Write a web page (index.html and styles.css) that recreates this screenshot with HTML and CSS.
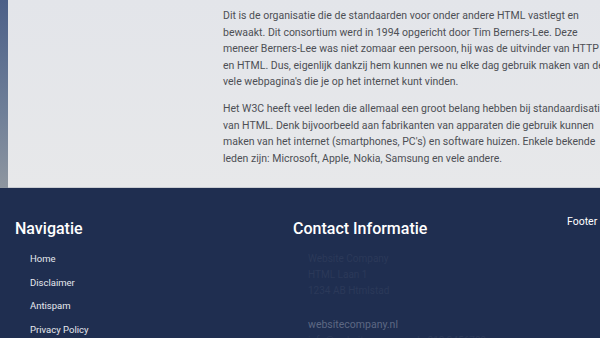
FILE: index.html
```html
<!DOCTYPE html>
<html lang="nl">
  <head>
    <meta charset="UTF-8" />
    <meta name="viewport" content="width=device-width, initial-scale=1.0" />
    <title>W3C</title>
    <link rel="stylesheet" href="styles.css">
  </head>
  <body>
    <div class="top">
      <div class="side-strip"></div>
      <div class="panel">
        <div class="article">
          <p>Dit is de organisatie die de standaarden voor onder andere HTML vastlegt en bewaakt. Dit consortium werd in 1994 opgericht door Tim Berners-Lee. Deze meneer Berners-Lee was niet zomaar een persoon, hij was de uitvinder van HTTP en HTML. Dus, eigenlijk dankzij hem kunnen we nu elke dag gebruik maken van de vele webpagina's die je op het internet kunt vinden.</p>
          <p>Het W3C heeft veel leden die allemaal een groot belang hebben bij standaardisatie van HTML. Denk bijvoorbeeld aan fabrikanten van apparaten die gebruik kunnen maken van het internet (smartphones, PC's) en software huizen. Enkele bekende leden zijn: Microsoft, Apple, Nokia, Samsung en vele andere.</p>
        </div>
      </div>
    </div>

    <footer class="footer">
      <div class="footer-col">
        <h2>Navigatie</h2>
        <ul class="nav-list">
          <li><a href="#">Home</a></li>
          <li><a href="#">Disclaimer</a></li>
          <li><a href="#">Antispam</a></li>
          <li><a href="#">Privacy Policy</a></li>
        </ul>
      </div>
      <div class="footer-col">
        <h2>Contact Informatie</h2>
        <div class="contact">
          <p class="dim">Website Company</p>
          <p class="dim">HTML Laan 1</p>
          <p class="dim">1234 AB Htmlstad</p>
          <p class="site">websitecompany.nl</p>
          <p class="dim">info@websitecompany.nl - 012 3456789</p>
        </div>
      </div>
      <div class="footer-col small">
        <h3>Footer</h3>
      </div>
    </footer>
  </body>
</html>
```

FILE: styles.css
```css
body {
  margin: 0;
  font-family: Roboto, "Liberation Sans", sans-serif;
  overflow-x: hidden;
  background: #1f2e50;
}
.top {
  display: flex;
  height: 188px;
}
.side-strip {
  width: 8px;
  flex-shrink: 0;
  background: linear-gradient(180deg, #4c6088, #6f7f98 60%, #8e96a0);
}
.panel {
  flex: 1;
  background: linear-gradient(180deg, #e3e5ea, #e7e8ea);
  border-bottom: 1px solid #c9ccd2;
  padding-left: 215px;
  overflow: hidden;
}
.article {
  width: 385px;
  padding-top: 8px;
}
.article p {
  margin: 0 0 10px;
  font-size: 10.5px;
  line-height: 16.6px;
  color: #4d4f55;
}

/* Footer */
.footer {
  display: grid;
  grid-template-columns: 278px 274px 1fr;
  padding: 0 0 0 15px;
  height: 150px;
  overflow: hidden;
  background: #1f2e50;
}
.footer h2 {
  margin: 31px 0 13px;
  font-size: 16px;
  font-weight: 500;
  color: #ffffff;
}
.footer h3 {
  margin: 27px 0 0;
  font-size: 10.5px;
  font-weight: 400;
  color: #ffffff;
}
.nav-list {
  list-style: none;
  margin: 0;
  padding: 0 0 0 15px;
}
.nav-list li {
  height: 23.5px;
  line-height: 12px;
}
.nav-list a {
  font-size: 9.5px;
  color: #e6e8ee;
  text-decoration: none;
}
.contact {
  padding-left: 15px;
}
.contact p {
  margin: 0;
  font-size: 10px;
  line-height: 16px;
}
.contact .dim {
  color: #2b3959;
}
.contact .site {
  margin-top: 18px;
  font-size: 10.5px;
  color: #5d6883;
}
```
